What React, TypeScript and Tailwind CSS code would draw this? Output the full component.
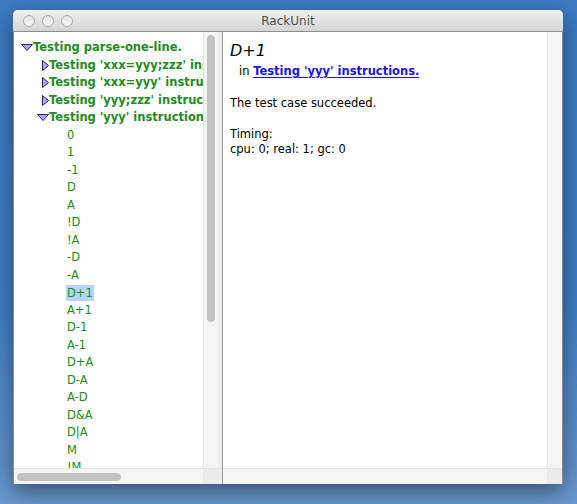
const tree: { kind: "root" | "closed" | "open" | "leaf"; label: string }[] = [
  { kind: "root", label: "Testing parse-one-line." },
  { kind: "closed", label: "Testing 'xxx=yyy;zzz' instructions." },
  { kind: "closed", label: "Testing 'xxx=yyy' instructions." },
  { kind: "closed", label: "Testing 'yyy;zzz' instructions." },
  { kind: "open", label: "Testing 'yyy' instructions." },
  ...["0", "1", "-1", "D", "A", "!D", "!A", "-D", "-A", "D+1", "A+1", "D-1", "A-1", "D+A", "D-A", "A-D", "D&A", "D|A", "M", "!M"].map(
    (label) => ({ kind: "leaf" as const, label })
  ),
];

const DownArrow = () => (
  <svg width="12" height="7" viewBox="0 0 12 7">
    <path d="M0.5 0.5 L11.5 0.5 L6 6.5 Z" fill="#a9a6f4" stroke="#23236b" strokeWidth="1" strokeLinejoin="round" />
  </svg>
);

const RightArrow = () => (
  <svg width="7" height="11" viewBox="0 0 7 11">
    <path d="M0.5 0.5 L6.5 5.5 L0.5 10.5 Z" fill="#a9a6f4" stroke="#23236b" strokeWidth="1" strokeLinejoin="round" />
  </svg>
);

const Row = ({ kind, label }: { kind: string; label: string }) => {
  if (kind === "root")
    return (
      <div className="flex h-[17.5px] items-center pl-[7px] font-bold">
        <span className="flex w-[12px] items-center"><DownArrow /></span>
        <span>{label}</span>
      </div>
    );
  if (kind === "closed")
    return (
      <div className="flex h-[17.5px] items-center pl-[28px] font-bold">
        <span className="flex w-[8px] items-center"><RightArrow /></span>
        <span>{label}</span>
      </div>
    );
  if (kind === "open")
    return (
      <div className="flex h-[17.5px] items-center pl-[23px] font-bold">
        <span className="flex w-[13px] items-center"><DownArrow /></span>
        <span>{label}</span>
      </div>
    );
  return (
    <div className="flex h-[17.5px] items-center pl-[52px]">
      {label === "D+1" ? (
        <span className="inline-block h-[16px] bg-[#b5d5fc] px-[1px] leading-[16px]">{label}</span>
      ) : (
        <span className="px-[1px]">{label}</span>
      )}
    </div>
  );
};

export default function App() {
  return (
    <div className="h-[504px] w-[577px] overflow-hidden bg-[linear-gradient(180deg,#3b7bc1_0%,#3f7ec3_60%,#6a98cf_100%)] pl-[13px] pt-[10px] font-['DejaVu_Sans',sans-serif]">
      <div className="flex h-[474px] w-[550px] flex-col overflow-hidden rounded-t-[5px] bg-[#ececec] shadow-[0_8px_22px_rgba(0,0,0,0.45)]">
        {/* TITLE BAR */}
        <div className="grid h-[22px] grid-cols-[80px_1fr_80px] items-center border-b border-[#8e8e8e] bg-[linear-gradient(180deg,#f0f0f0,#d5d5d5)]">
          <div className="flex items-center gap-[7px] pl-[10px]">
            <span className="h-[12px] w-[12px] rounded-full border border-[#a9a9a9] bg-[linear-gradient(180deg,#e4e4e4,#f6f6f6)]" />
            <span className="h-[12px] w-[12px] rounded-full border border-[#a9a9a9] bg-[linear-gradient(180deg,#e4e4e4,#f6f6f6)]" />
            <span className="h-[12px] w-[12px] rounded-full border border-[#a9a9a9] bg-[linear-gradient(180deg,#e4e4e4,#f6f6f6)]" />
          </div>
          <div className="text-center text-[12px] text-[#4d4d4d]">RackUnit</div>
          <div />
        </div>

        {/* BODY */}
        <div className="flex flex-1">
          {/* LEFT PANE */}
          <div className="flex w-[209px] flex-col border-l border-[#8a8a8a]">
            <div className="flex flex-1">
              <div className="h-[436px] w-[189px] overflow-hidden whitespace-nowrap bg-white pt-[7px] text-[11.5px] text-[#228b22]">
                {tree.map((r, i) => (
                  <Row key={i} kind={r.kind} label={r.label} />
                ))}
              </div>
              <div className="flex w-[15px] flex-col items-center border-l border-[#e3e3e3] bg-[#f5f5f5]">
                <div className="mt-[3px] h-[287px] w-[8px] rounded-full bg-[#c2c2c2]" />
              </div>
              <div className="w-[4px] bg-[#ececec]" />
            </div>
            <div className="flex h-[16px] border-t border-[#e3e3e3] bg-[#f5f5f5]">
              <div className="flex w-[189px] items-center">
                <div className="ml-[3px] h-[8px] w-[104px] rounded-full bg-[#c2c2c2]" />
              </div>
              <div className="flex-1 bg-[#ececec]" />
            </div>
          </div>

          <div className="w-px bg-[#9a9a9a]" />

          {/* RIGHT PANE */}
          <div className="flex flex-1 flex-col border-r border-[#8a8a8a]">
            <div className="flex flex-1">
              <div className="flex-1 bg-white pl-[7px] pt-[10px] text-[11.5px] text-black">
                <div className="text-[16px] italic leading-[18.6px]">D+1</div>
                <div className="mt-[2px] pl-[9px] leading-[16px]">
                  in{" "}
                  <span className="font-bold text-[#1414f0] underline decoration-1 underline-offset-2">
                    Testing 'yyy' instructions.
                  </span>
                </div>
                <div className="mt-[16px] leading-[16px]">The test case succeeded.</div>
                <div className="mt-[16px] leading-[15px]">Timing:</div>
                <div className="leading-[15px]">cpu: 0; real: 1; gc: 0</div>
              </div>
              <div className="w-[15px] border-l border-[#e3e3e3] bg-[#f5f5f5]" />
            </div>
            <div className="flex h-[16px] border-t border-[#e3e3e3] bg-[#f5f5f5]">
              <div className="flex-1" />
              <div className="w-[15px] bg-[#ececec]" />
            </div>
          </div>
        </div>
      </div>
    </div>
  );
}
